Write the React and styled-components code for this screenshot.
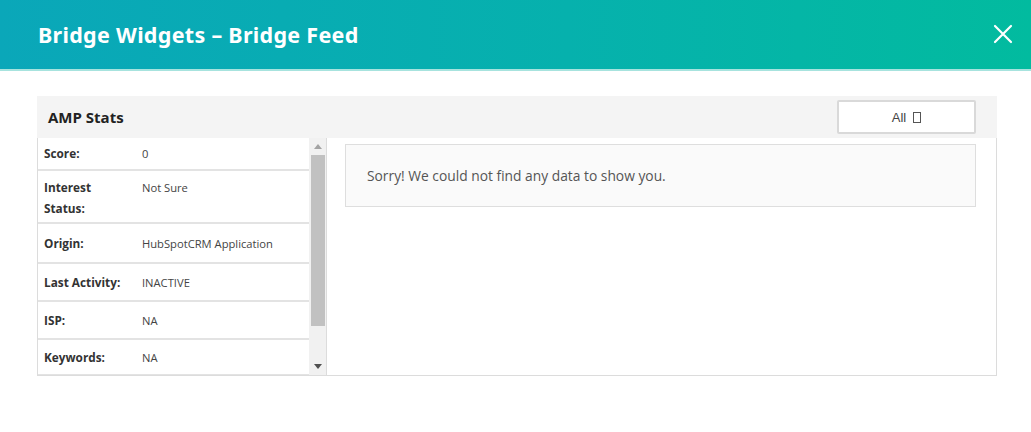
import React from 'react';
import styled, { createGlobalStyle } from 'styled-components';

const GlobalStyle = createGlobalStyle`
  html, body {
    margin: 0;
    padding: 0;
    background: #fff;
    font-family: "Open Sans", "Liberation Sans", sans-serif;
  }
`;

const Modal = styled.div`
  width: 1031px;
  height: 432px;
  background: #fff;
`;

const Header = styled.header`
  height: 69px;
  display: flex;
  align-items: center;
  justify-content: space-between;
  padding: 0 16px 0 38px;
  background: linear-gradient(90deg, #0aa7b9 0%, #06b1ad 55%, #02bb9f 100%);
  border-bottom: 2px solid #a7e3de;
`;

const Title = styled.h1`
  margin: 0;
  font-family: "Noto Sans", "Open Sans", sans-serif;
  font-size: 21.5px;
  font-weight: 700;
  color: #fff;
  letter-spacing: 0.3px;
`;

const Close = styled.button`
  border: 0;
  background: none;
  padding: 0;
  width: 24px;
  height: 24px;
  display: flex;
  align-items: center;
  justify-content: center;
  margin-bottom: 2px;
`;

const Body = styled.div`
  padding: 25px 34px 0 37px;
`;

const Panel = styled.section`
  width: 960px;
  border: 1px solid #dcdcdc;
  border-top: 0;
  box-sizing: border-box;
`;

const PanelHead = styled.div`
  height: 42px;
  background: #f4f4f4;
  display: flex;
  align-items: center;
  justify-content: space-between;
  padding: 0 21px 0 11px;
  margin: 0 -1px;
`;

const PanelTitle = styled.h2`
  margin: 0;
  font-size: 15px;
  font-weight: 700;
  color: #222;
`;

const Select = styled.button`
  width: 139px;
  height: 34px;
  background: #fff;
  border: 2px solid #d9d9d9;
  border-radius: 2px;
  font-family: "Liberation Sans", Arial, sans-serif;
  font-size: 13px;
  color: #444;
  display: flex;
  align-items: center;
  justify-content: center;
  gap: 7px;
  padding: 0;
`;

const Glyph = styled.span`
  display: inline-block;
  width: 6px;
  height: 9px;
  border: 1px solid #555;
`;

const Split = styled.div`
  display: flex;
  height: 237px;
`;

const ListWrap = styled.div`
  width: 288px;
  display: flex;
  border-right: 1px solid #dcdcdc;
`;

const List = styled.div`
  flex: 1;
  overflow: hidden;
`;

const Row = styled.div`
  display: grid;
  grid-template-columns: 98px 1fr;
  padding: ${p => (p.$tall ? '6px 6px 5px' : '0 6px')};
  height: ${p => p.$h}px;
  align-items: ${p => (p.$tall ? 'start' : 'center')};
  border-bottom: 2px solid #e3e3e3;
  box-sizing: border-box;
  font-size: 11.8px;
  line-height: 21px;
`;

const Label = styled.span`
  font-weight: 700;
  color: #333;
`;

const Value = styled.span`
  color: #444;
  font-size: 11.2px;
`;

const Scrollbar = styled.div`
  width: 17px;
  background: #f1f1f1;
  display: flex;
  flex-direction: column;
  align-items: center;
`;

const Arrow = styled.div`
  height: 17px;
  display: flex;
  align-items: center;
  justify-content: center;
  width: 100%;
`;

const Thumb = styled.div`
  width: 14px;
  height: 171px;
  background: #c1c1c1;
`;

const Track = styled.div`
  flex: 1;
`;

const Content = styled.div`
  flex: 1;
  padding: 6px 20px 0 18px;
`;

const Empty = styled.div`
  height: 63px;
  box-sizing: border-box;
  background: #fafafa;
  border: 1px solid #dedede;
  display: flex;
  align-items: center;
  padding-left: 21px;
  font-size: 13.8px;
  color: #555;
`;

const rows = [
  { label: 'Score:', value: '0', h: 33 },
  { label: 'Interest Status:', value: 'Not Sure', h: 53, tall: true },
  { label: 'Origin:', value: 'HubSpotCRM Application', h: 40 },
  { label: 'Last Activity:', value: 'INACTIVE', h: 38 },
  { label: 'ISP:', value: 'NA', h: 38 },
  { label: 'Keywords:', value: 'NA', h: 36 },
];

export default function App() {
  return (
    <Modal>
      <GlobalStyle />
      <Header>
        <Title>Bridge Widgets – Bridge Feed</Title>
        <Close aria-label="Close">
          <svg width="20" height="20" viewBox="0 0 20 20">
            <path d="M2 2 L18 18 M18 2 L2 18" stroke="#fff" strokeWidth="2.2" strokeLinecap="round" />
          </svg>
        </Close>
      </Header>
      <Body>
        <Panel>
          <PanelHead>
            <PanelTitle>AMP Stats</PanelTitle>
            <Select>
              All <Glyph />
            </Select>
          </PanelHead>
          <Split>
            <ListWrap>
              <List>
                {rows.map(r => (
                  <Row key={r.label} $h={r.h} $tall={r.tall}>
                    <Label>{r.label === 'Interest Status:' ? <>Interest<br />Status:</> : r.label}</Label>
                    <Value>{r.value}</Value>
                  </Row>
                ))}
              </List>
              <Scrollbar>
                <Arrow>
                  <svg width="8" height="5" viewBox="0 0 8 5"><path d="M0 5 L4 0 L8 5 Z" fill="#a3a3a3" /></svg>
                </Arrow>
                <Thumb />
                <Track />
                <Arrow>
                  <svg width="8" height="5" viewBox="0 0 8 5"><path d="M0 0 L8 0 L4 5 Z" fill="#505050" /></svg>
                </Arrow>
              </Scrollbar>
            </ListWrap>
            <Content>
              <Empty>Sorry! We could not find any data to show you.</Empty>
            </Content>
          </Split>
        </Panel>
      </Body>
    </Modal>
  );
}
